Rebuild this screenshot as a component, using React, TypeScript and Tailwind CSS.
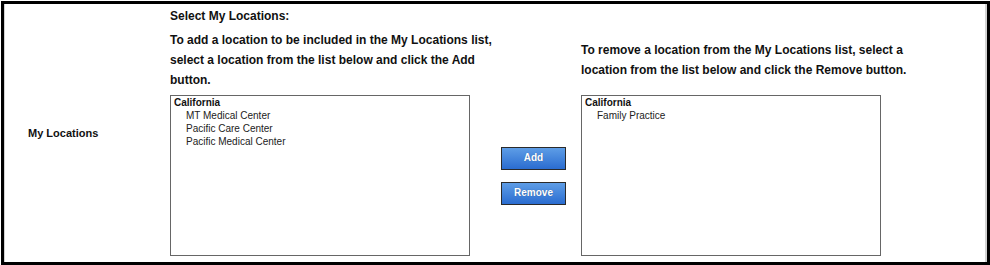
import React from "react";

const font = { fontFamily: '"Liberation Sans", Arial, Helvetica, sans-serif' };

function ListBox({ items }: { items: string[] }) {
  return (
    <div className="w-[300px] h-[161px] border border-[#666666] bg-white pl-[3px] pt-0 text-[10px] leading-[13px] text-[#222222]">
      <div className="font-bold text-[#111111]">California</div>
      {items.map((it) => (
        <div key={it} className="pl-[12px]">
          {it}
        </div>
      ))}
    </div>
  );
}

function BlueButton({ label }: { label: string }) {
  return (
    <button
      type="button"
      className="w-[65px] h-[23px] border border-[#2a2a2a] bg-gradient-to-b from-[#5e9de6] to-[#2a6cd0] text-white text-[10px] font-bold leading-none [text-shadow:0_0_1px_rgba(0,0,0,0.35)]"
    >
      {label}
    </button>
  );
}

export default function App() {
  return (
    <div className="w-[990px] h-[265px] bg-white pt-px pl-px" style={font}>
      <div className="w-[989px] h-[264px] border-[3px] border-black flex">
        <div className="flex-1 flex border-l border-r-2 border-[#d2d2d2]">
          <div className="w-[165px] flex items-center pl-[23px] text-[11px] font-bold text-[#111111]">
            My Locations
          </div>
          <div className="flex-1 pt-[2px] text-[#111111]">
            <div className="text-[12px] font-bold leading-[20px]">Select My Locations:</div>
            <div className="grid grid-cols-[331px_80px_1fr] mt-[4px]">
              <div className="text-[12px] font-bold leading-[20px] whitespace-nowrap">
                To add a location to be included in the My Locations list,
                <br />
                select a location from the list below and click the Add
                <br />
                button.
              </div>
              <div />
              <div className="flex items-center text-[12px] font-bold leading-[20px] whitespace-nowrap">
                <div>
                  To remove a location from the My Locations list, select a
                  <br />
                  location from the list below and click the Remove button.
                </div>
              </div>
              <div className="mt-[5px]">
                <ListBox items={["MT Medical Center", "Pacific Care Center", "Pacific Medical Center"]} />
              </div>
              <div className="mt-[5px] flex flex-col justify-center gap-[12px]">
                <BlueButton label="Add" />
                <BlueButton label="Remove" />
              </div>
              <div className="mt-[5px]">
                <ListBox items={["Family Practice"]} />
              </div>
            </div>
          </div>
        </div>
      </div>
    </div>
  );
}
